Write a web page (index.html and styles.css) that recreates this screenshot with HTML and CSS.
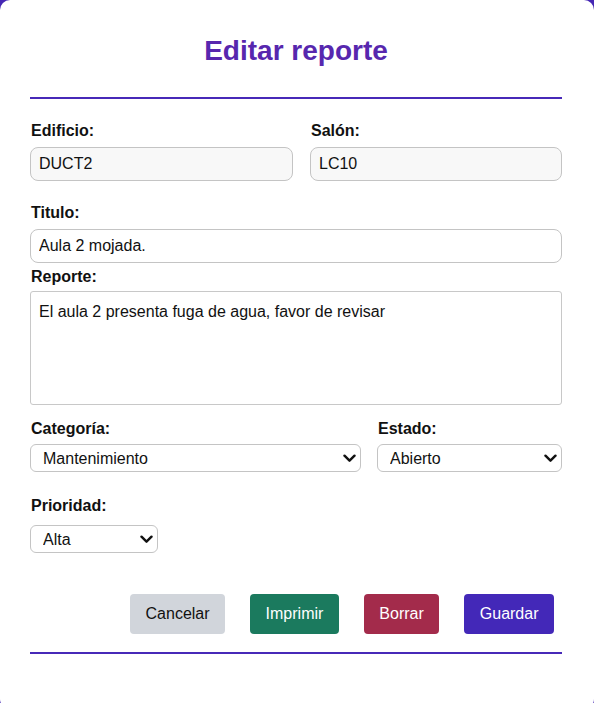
FILE: index.html
```html
<!DOCTYPE html>
<html lang="es">
<head>
<meta charset="utf-8">
<title>Editar reporte</title>
<link rel="stylesheet" href="styles.css">
</head>
<body>
<div class="card">
  <h1 class="title">Editar reporte</h1>
  <div class="rule"></div>

  <div class="row two">
    <div class="field">
      <label class="label">Edificio:</label>
      <input class="input readonly" type="text" value="DUCT2" readonly>
    </div>
    <div class="field">
      <label class="label">Salón:</label>
      <input class="input readonly" type="text" value="LC10" readonly>
    </div>
  </div>

  <div class="field titulo">
    <label class="label">Titulo:</label>
    <input class="input" type="text" value="Aula 2 mojada.">
  </div>

  <div class="field reporte">
    <label class="label label-tight">Reporte:</label>
    <textarea class="textarea">El aula 2 presenta fuga de agua, favor de revisar</textarea>
  </div>

  <div class="row selects">
    <div class="field">
      <label class="label label-sel">Categoría:</label>
      <div class="select-wrap">
        <select class="select"><option>Mantenimiento</option></select>
        <svg class="chev" viewBox="0 0 13 9" width="13" height="9"><path d="M1.5 1.7 6.5 6.7 11.5 1.7" fill="none" stroke="#111" stroke-width="2.4" stroke-linecap="round" stroke-linejoin="round"/></svg>
      </div>
    </div>
    <div class="field">
      <label class="label label-sel">Estado:</label>
      <div class="select-wrap">
        <select class="select"><option>Abierto</option></select>
        <svg class="chev" viewBox="0 0 13 9" width="13" height="9"><path d="M1.5 1.7 6.5 6.7 11.5 1.7" fill="none" stroke="#111" stroke-width="2.4" stroke-linecap="round" stroke-linejoin="round"/></svg>
      </div>
    </div>
  </div>

  <div class="field prioridad">
    <label class="label label-pri">Prioridad:</label>
    <div class="select-wrap small">
      <select class="select"><option>Alta</option></select>
      <svg class="chev" viewBox="0 0 13 9" width="13" height="9"><path d="M1.5 1.7 6.5 6.7 11.5 1.7" fill="none" stroke="#111" stroke-width="2.4" stroke-linecap="round" stroke-linejoin="round"/></svg>
    </div>
  </div>

  <div class="actions">
    <button class="btn btn-cancel">Cancelar</button>
    <button class="btn btn-print">Imprimir</button>
    <button class="btn btn-delete">Borrar</button>
    <button class="btn btn-save">Guardar</button>
  </div>
  <div class="rule bottom"></div>
</div>
</body>
</html>
```

FILE: styles.css
```css
html, body {
  margin: 0;
  padding: 0;
  height: 100%;
  overflow: hidden;
}
body {
  background: #4527b4;
  font-family: "Liberation Sans", Arial, sans-serif;
  color: #111;
}
.card {
  background: #fff;
  border-radius: 10px;
  height: 709px;
  box-sizing: border-box;
  padding: 35px 32px 0 30px;
}
.title {
  margin: 0;
  font-size: 28px;
  line-height: 32px;
  font-weight: 700;
  text-align: center;
  color: #5727ae;
}
.rule {
  height: 2px;
  background: #4729b8;
  margin-top: 30px;
}
.rule.bottom {
  margin-top: 18px;
}
.row.two {
  display: grid;
  grid-template-columns: 263px 1fr;
  column-gap: 17px;
  margin-top: 23px;
}
.field {
  display: flex;
  flex-direction: column;
}
.label {
  font-size: 16px;
  line-height: 18px;
  font-weight: 700;
  margin-bottom: 7px;
  padding-left: 1px;
}
.label-tight { margin-bottom: 5px; }
.label-sel { margin-bottom: 6px; }
.label-pri { margin-bottom: 10px; }
.input {
  box-sizing: border-box;
  height: 34px;
  border: 1px solid #c4c4c4;
  border-radius: 8px;
  padding: 0 8px;
  font: 16px "Liberation Sans", Arial, sans-serif;
  color: #111;
  background: #fff;
  width: 100%;
}
.input.readonly {
  background: #f8f8f8;
}
.titulo { margin-top: 23px; }
.reporte { margin-top: 5px; }
.textarea {
  box-sizing: border-box;
  height: 114px;
  border: 1px solid #c8c8c8;
  border-radius: 3px;
  padding: 9px 8px;
  font: 16px/22px "Liberation Sans", Arial, sans-serif;
  color: #111;
  resize: none;
  width: 100%;
}
.row.selects {
  display: grid;
  grid-template-columns: 331px 1fr;
  column-gap: 16px;
  margin-top: 15px;
}
.select-wrap {
  position: relative;
}
.select-wrap.small {
  width: 128px;
}
.select {
  -webkit-appearance: none;
  appearance: none;
  box-sizing: border-box;
  width: 100%;
  height: 28px;
  border: 1px solid #c4c4c4;
  border-radius: 6px;
  background: #fff;
  padding: 0 28px 0 12px;
  font: 16px "Liberation Sans", Arial, sans-serif;
  color: #111;
}
.chev {
  position: absolute;
  right: 5px;
  top: 10px;
  pointer-events: none;
}
.prioridad { margin-top: 25px; }
.actions {
  display: flex;
  justify-content: flex-end;
  gap: 25px;
  margin-top: 41px;
  padding-right: 8px;
}
.btn {
  height: 40px;
  border: 0;
  border-radius: 4px;
  padding: 0 15.5px;
  font: 16px "Liberation Sans", Arial, sans-serif;
  color: #fff;
}
.btn-cancel { background: #d1d5db; color: #111; }
.btn-print { background: #1b7a5e; }
.btn-delete { background: #a32b4b; }
.btn-save { background: #4328b8; }
```
